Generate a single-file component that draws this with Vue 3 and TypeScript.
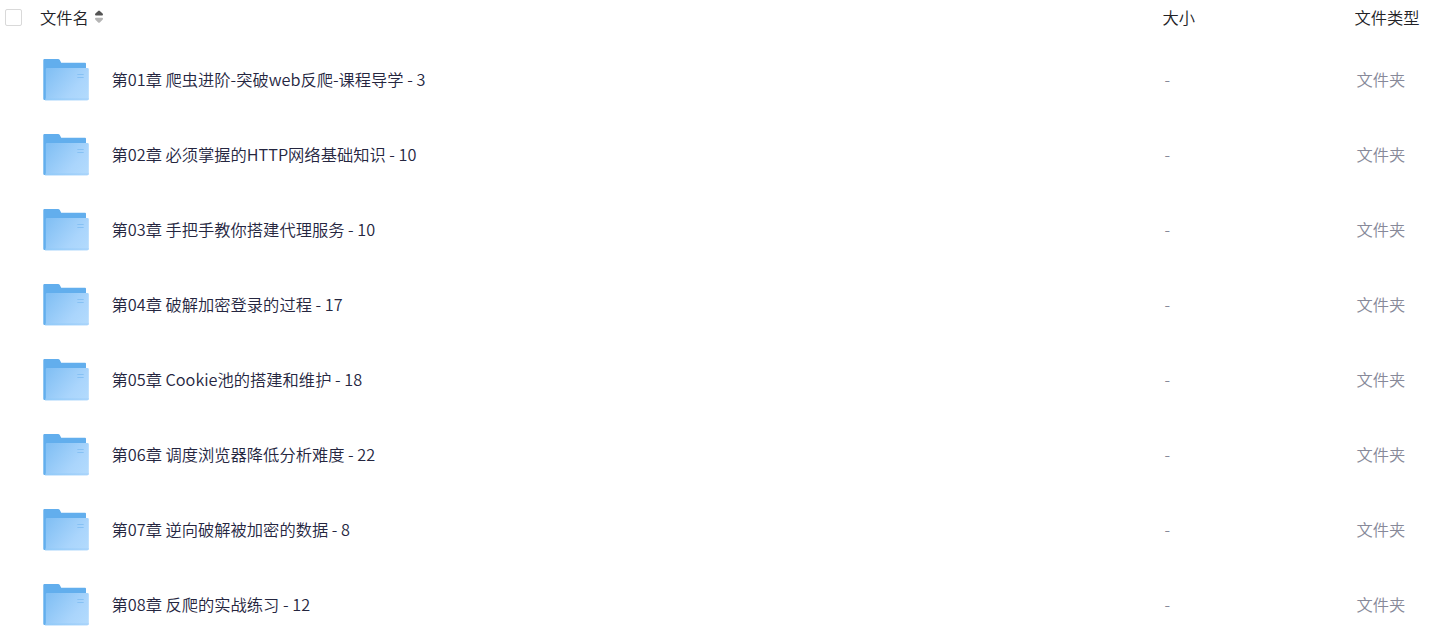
<script setup lang="ts">
import { ref } from 'vue';

interface FileItem {
  name: string;
  size: string;
  type: string;
}

const files = ref<FileItem[]>([
  { name: '第01章 爬虫进阶-突破web反爬-课程导学 - 3', size: '-', type: '文件夹' },
  { name: '第02章 必须掌握的HTTP网络基础知识 - 10', size: '-', type: '文件夹' },
  { name: '第03章 手把手教你搭建代理服务 - 10', size: '-', type: '文件夹' },
  { name: '第04章 破解加密登录的过程 - 17', size: '-', type: '文件夹' },
  { name: '第05章 Cookie池的搭建和维护 - 18', size: '-', type: '文件夹' },
  { name: '第06章 调度浏览器降低分析难度 - 22', size: '-', type: '文件夹' },
  { name: '第07章 逆向破解被加密的数据 - 8', size: '-', type: '文件夹' },
  { name: '第08章 反爬的实战练习 - 12', size: '-', type: '文件夹' },
]);
</script>

<template>
  <div class="file-list">
    <svg class="defs" width="0" height="0" aria-hidden="true">
      <defs>
        <linearGradient id="folder-front" x1="0" y1="0.2" x2="1" y2="0.8">
          <stop offset="0" stop-color="#83c0f4" />
          <stop offset="0.7" stop-color="#aad5fc" />
          <stop offset="1" stop-color="#b2dafd" />
        </linearGradient>
        <linearGradient id="folder-edge" x1="0" y1="0" x2="1" y2="0">
          <stop offset="0" stop-color="#92caf8" />
          <stop offset="1" stop-color="#a9d4fb" />
        </linearGradient>
      </defs>
    </svg>

    <div class="header">
      <span class="checkbox"></span>
      <div class="header-name">
        <span>文件名</span>
        <svg class="sort" width="8" height="14" viewBox="0 0 8 14">
          <path d="M3.2 .9Q4 .2 4.8 .9L7.6 3.6Q8.6 5.6 7 5.6H1Q-.6 5.6 .4 3.6Z" fill="#545454" />
          <path d="M3.2 12.5Q4 13.2 4.8 12.5L7.6 9.8Q8.6 7.8 7 7.8H1Q-.6 7.8 .4 9.8Z" fill="#b5b5b5" />
        </svg>
      </div>
      <span class="header-size">大小</span>
      <span class="header-type">文件类型</span>
    </div>

    <div v-for="file in files" :key="file.name" class="row">
      <svg class="folder" width="48" height="43" viewBox="0 0 48 43">
        <path d="M1.3 2.2Q1.3 1 2.5 1H16Q17.2 1 17.8 2L19.2 4.8H43Q44 4.8 44 5.8V42H2.5Q1.3 42 1.3 40.8Z" fill="#62aeed" />
        <path d="M3.8 11.2Q3.8 10 5 10H45.4Q46.8 10 46.8 11.2V40.8Q46.8 42.2 45.4 42.2H3Q3.8 41.5 3.8 40Z" fill="url(#folder-front)" />
        <path d="M3.8 40.2H46.8V40.8Q46.8 42.2 45.4 42.2H3Q3.8 41.5 3.8 40.2Z" fill="url(#folder-edge)" />
        <path d="M35.3 16.5H41.7M35.3 19.5H41.7" stroke="#86c1f4" stroke-width="1" />
      </svg>
      <span class="name">{{ file.name }}</span>
      <span class="size">{{ file.size }}</span>
      <span class="type">{{ file.type }}</span>
    </div>
  </div>
</template>

<style>
body {
  background: #fff;
}
</style>

<style scoped>
.file-list {
  box-sizing: border-box;
  width: 1440px;
  height: 636px;
  overflow: hidden;
  font-family: "Noto Sans CJK SC", sans-serif;
  font-size: 16.28px;
  font-weight: 350;
  line-height: 24px;
  white-space: nowrap;
}

.defs {
  display: block;
}

.header,
.row {
  display: grid;
  grid-template-columns: 40px 1122.5px 192px 1fr;
  align-items: center;
}

.header {
  height: 34px;
  margin-bottom: 8px;
  color: #222226;
}

.checkbox {
  box-sizing: border-box;
  width: 17px;
  height: 17px;
  margin-left: 5px;
  border: 1px solid #d9d9d9;
  border-radius: 2px;
}

.header-name {
  display: flex;
  align-items: center;
  gap: 6px;
}

.row {
  grid-template-columns: 48px 1053px 192px 1fr;
  height: 75px;
  padding-left: 42px;
}

.name,
.size,
.type {
  padding: 0 0 2px 21.5px;
}

.name {
  color: #25263f;
}

.size,
.type {
  color: #878999;
}
</style>
